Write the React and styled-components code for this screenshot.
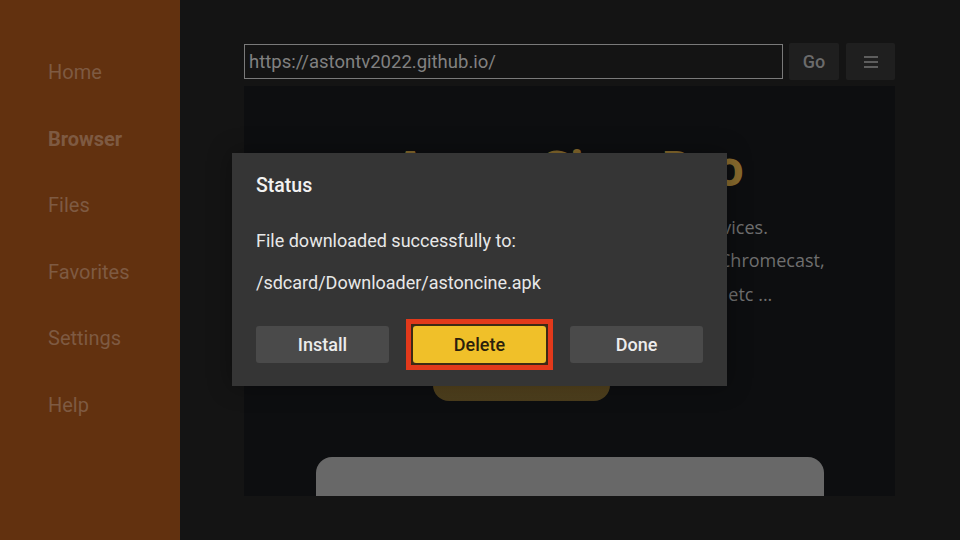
import React from "react";
import styled, { createGlobalStyle } from "styled-components";

const Global = createGlobalStyle`
  html, body { margin: 0; padding: 0; background: #141414; }
  body { font-family: Roboto, "Liberation Sans", sans-serif; }
  * { box-sizing: border-box; }
`;

const Screen = styled.div`
  position: relative;
  width: 960px;
  height: 540px;
  display: flex;
  overflow: hidden;
  background: #141414;
`;

const Sidebar = styled.nav`
  width: 180px;
  flex: none;
  background: #62310f;
  padding: 39px 0 0 48px;
  display: flex;
  flex-direction: column;
`;

const NavItem = styled.div`
  height: 66.5px;
  line-height: 66px;
  font-size: 20px;
  font-weight: ${(p) => (p.$active ? 700 : 400)};
  color: #7e5a42;
`;

const Main = styled.main`
  flex: 1;
  display: flex;
  flex-direction: column;
  padding: 43px 65px 44px 64px;
`;

const Toolbar = styled.div`
  display: flex;
  align-items: center;
  height: 37px;
  flex: none;
`;

const UrlField = styled.div`
  width: 539px;
  height: 35px;
  border: 1px solid #7a7a7a;
  padding-left: 4px;
  display: flex;
  align-items: center;
  font-size: 18.5px;
  color: #818181;
  margin-right: 6px;
`;

const ToolButton = styled.div`
  width: ${(p) => p.$w}px;
  height: 37px;
  margin-left: ${(p) => p.$ml || 0}px;
  background: #1f1f1f;
  border-radius: 2px;
  display: flex;
  align-items: center;
  justify-content: center;
  font-size: 18px;
  font-weight: 500;
  color: #6b6b6b;
`;

const WebView = styled.div`
  margin-top: 6px;
  flex: 1;
  background: #0d0e10;
  overflow: hidden;
  display: flex;
  flex-direction: column;
  align-items: center;
  padding-top: 58.4px;
  & > * { flex: none; }
`;

const SiteTitle = styled.div`
  font-family: "Open Sans", Roboto, sans-serif;
  font-size: 48px;
  line-height: 48px;
  font-weight: 700;
  color: #886b2e;
  white-space: nowrap;
  letter-spacing: 1px;
`;

const SiteText = styled.div`
  margin-top: 18.3px;
  font-family: "Open Sans", Roboto, sans-serif;
  font-size: 18px;
  line-height: 33.5px;
  color: #6f6f6f;
  text-align: center;
  white-space: nowrap;
`;

const SiteButton = styled.div`
  margin-top: 38px;
  width: 177px;
  height: 52px;
  border-radius: 16px;
  background: linear-gradient(#6b5420, #4b3d1d);
  transform: translateX(-48px);
`;

const SiteCard = styled.div`
  margin-top: 55.5px;
  width: 508px;
  height: 120px;
  border-radius: 16px 16px 0 0;
  background: #686868;
`;

const Dialog = styled.div`
  position: absolute;
  left: 232px;
  top: 153px;
  width: 495px;
  height: 233px;
  background: #353535;
  box-shadow: 0 0 22px rgba(0, 0, 0, 0.35);
  padding: 22px 24px 0 24px;
  display: flex;
  flex-direction: column;
`;

const DialogTitle = styled.div`
  font-size: 19.5px;
  line-height: 22px;
  font-weight: 500;
  color: #f2f2f2;
`;

const DialogLine = styled.div`
  margin-top: ${(p) => p.$mt}px;
  font-size: 18px;
  line-height: 22px;
  color: #e8e8e8;
`;

const ButtonRow = styled.div`
  margin-top: 32px;
  display: grid;
  grid-template-columns: repeat(3, 1fr);
  gap: 24px;
`;

const DialogButton = styled.div`
  position: relative;
  height: 37px;
  border-radius: 3px;
  display: flex;
  align-items: center;
  justify-content: center;
  font-size: 18px;
  font-weight: 500;
  background: ${(p) => (p.$focused ? "#f0c029" : "#4a4a4a")};
  color: ${(p) => (p.$focused ? "#2b1f0c" : "#ececec")};

  &::after {
    content: "";
    display: ${(p) => (p.$focused ? "block" : "none")};
    position: absolute;
    inset: -7px;
    border: 5px solid #e2391b;
    box-shadow: inset 0 0 0 2px #3e2a14;
  }
`;

const MenuIcon = () => (
  <svg width="16" height="14" viewBox="0 0 16 14">
    <g stroke="#6e6e6e" strokeWidth="1.6">
      <line x1="1" y1="2" x2="15" y2="2" />
      <line x1="1" y1="7" x2="15" y2="7" />
      <line x1="1" y1="12" x2="15" y2="12" />
    </g>
  </svg>
);

export default function App() {
  const nav = ["Home", "Browser", "Files", "Favorites", "Settings", "Help"];
  return (
    <>
      <Global />
      <Screen>
        <Sidebar>
          {nav.map((n) => (
            <NavItem key={n} $active={n === "Browser"}>
              {n}
            </NavItem>
          ))}
        </Sidebar>
        <Main>
          <Toolbar>
            <UrlField>https://astontv2022.github.io/</UrlField>
            <ToolButton $w={50}>Go</ToolButton>
            <ToolButton $w={49} $ml={7}>
              <MenuIcon />
            </ToolButton>
          </Toolbar>
          <WebView>
            <SiteTitle>AstonCine Pro</SiteTitle>
            <SiteText>
              Watch free movies and TV shows on all devices.
              <br />
              Supports Android phones, Firestick, Android TV, Chromecast,
              <br />
              Smart TV, Roku, Apple TV, Mi Box, PC, Mac, etc ...
            </SiteText>
            <SiteButton />
            <SiteCard />
          </WebView>
        </Main>
        <Dialog>
          <DialogTitle>Status</DialogTitle>
          <DialogLine $mt={33}>File downloaded successfully to:</DialogLine>
          <DialogLine $mt={20}>/sdcard/Downloader/astoncine.apk</DialogLine>
          <ButtonRow>
            <DialogButton>Install</DialogButton>
            <DialogButton $focused>Delete</DialogButton>
            <DialogButton>Done</DialogButton>
          </ButtonRow>
        </Dialog>
      </Screen>
    </>
  );
}
